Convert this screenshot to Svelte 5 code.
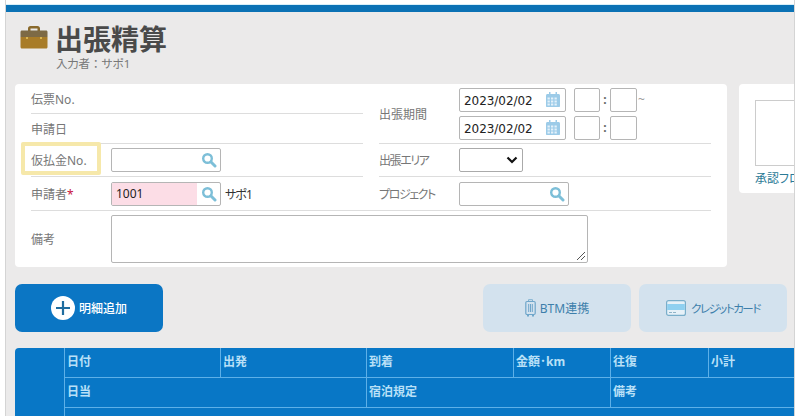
<script>
  const topLeft = [
    { label: "伝票No." },
    { label: "申請日" },
  ];
</script>

<div class="frame">
  <div class="topbar"></div>

  <header class="head">
    <svg class="bag" width="28" height="24" viewBox="0 0 28 24">
      <path d="M8 6V3.500C8 2 9 1 10.500 1h7C19 1 20 2 20 3.500V6h-2.500V3.500h-7V6z" fill="#8a6a2c" />
      <path d="M2 5.500h24c1 0 1.500.7 1.500 1.500v5H.5V7c0-.8.5-1.500 1.500-1.500z" fill="#7d6a45" />
      <path d="M.5 12h27v10c0 .8-.5 1.500-1.500 1.500H2C1 23.500.5 22.800.5 22z" fill="#a87c28" />
      <circle cx="7" cy="13" r="1" fill="#e8c860" />
      <circle cx="21" cy="13" r="1" fill="#e8c860" />
    </svg>
    <div>
      <h1>出張精算</h1>
      <p class="sub">入力者：サポ1</p>
    </div>
  </header>

  <div class="cards">
    <section class="card main">
      <div class="cols">
        <div class="col">
          {#each topLeft as row}
            <div class="row short"><span class="label">{row.label}</span></div>
          {/each}
          <div class="row tall">
            <span class="label hl">仮払金No.</span>
            <div class="field w110">
              <span class="val"></span>
              <svg class="loupe" width="16" height="16" viewBox="0 0 16 16"><circle cx="6.500" cy="6.500" r="4.300" fill="none" stroke="#7dbfd8" stroke-width="2.400" /><path d="M10 10l4 4" stroke="#7dbfd8" stroke-width="3" stroke-linecap="round" /></svg>
            </div>
          </div>
          <div class="row tall last">
            <span class="label">申請者<em>*</em></span>
            <div class="field w110">
              <span class="val pink">1001</span>
              <svg class="loupe" width="16" height="16" viewBox="0 0 16 16"><circle cx="6.500" cy="6.500" r="4.300" fill="none" stroke="#7dbfd8" stroke-width="2.400" /><path d="M10 10l4 4" stroke="#7dbfd8" stroke-width="3" stroke-linecap="round" /></svg>
            </div>
            <span class="name">サポ1</span>
          </div>
        </div>

        <div class="col">
          <div class="row period">
            <span class="label">出張期間</span>
            <div class="dates">
              {#each [0, 1] as i}
                <div class="dateline">
                  <div class="field w107">
                    <span class="val date">2023/02/02</span>
                    <svg class="cal" width="14" height="15" viewBox="0 0 14 15">
                      <path d="M0 3.500c0-.8.6-1.500 1.500-1.500h11c.9 0 1.500.7 1.500 1.500V14c0 .6-.4 1-1 1H1c-.6 0-1-.4-1-1z" fill="#9ccbe8" />
                      <path d="M3 0h1.500v3H3zM9.500 0H11v3H9.500z" fill="#9ccbe8" />
                      <path d="M1.500 5.500h2.300v2H1.500zM5 5.500h2.300v2H5zM8.500 5.500h2.300v2H8.500zM1.500 8.500h2.300v2H1.500zM5 8.500h2.300v2H5zM8.500 8.500h2.300v2H8.500zM1.500 11.500h2.300v2H1.500zM5 11.500h2.300v2H5zM8.500 11.500h2.300v2H8.500z" fill="#e4f1fa" />
                    </svg>
                  </div>
                  <span class="time first"></span>
                  <span class="colon">:</span>
                  <span class="time"></span>
                  {#if i === 0}<span class="tilde">~</span>{/if}
                </div>
              {/each}
            </div>
          </div>
          <div class="row tall">
            <span class="label kana">出張エリア</span>
            <div class="select">
              <svg width="12" height="8" viewBox="0 0 12 8"><path d="M1.500 1.500L6 6l4.500-4.500" fill="none" stroke="#111" stroke-width="2.200" /></svg>
            </div>
          </div>
          <div class="row tall last">
            <span class="label kana">プロジェクト</span>
            <div class="field w110">
              <span class="val"></span>
              <svg class="loupe" width="16" height="16" viewBox="0 0 16 16"><circle cx="6.500" cy="6.500" r="4.300" fill="none" stroke="#7dbfd8" stroke-width="2.400" /><path d="M10 10l4 4" stroke="#7dbfd8" stroke-width="3" stroke-linecap="round" /></svg>
            </div>
          </div>
        </div>
      </div>

      <div class="memo">
        <span class="label">備考</span>
        <div class="area">
          <svg class="grip" width="10" height="10" viewBox="0 0 10 10"><path d="M1 9l8-8M5 9l4-4" stroke="#555" stroke-width="1" /></svg>
        </div>
      </div>
    </section>

    <aside class="card flow">
      <div class="stamp"></div>
      <span class="flowlink">承認フロー</span>
    </aside>
  </div>

  <div class="actions">
    <button class="btn primary">
      <svg width="24" height="24" viewBox="0 0 24 24"><circle cx="12" cy="12" r="12" fill="#fff" /><path d="M12 5v14M5 12h14" stroke="#1f6d9f" stroke-width="2.200" /></svg>
      明細追加
    </button>
    <div class="spacer"></div>
    <button class="btn soft">
      <svg width="11" height="18" viewBox="0 0 11 18">
        <path d="M3.500 2.500V.7h4v1.800" fill="none" stroke="#7fb0d0" stroke-width="1" />
        <rect x=".8" y="2.500" width="9.400" height="13" rx="1.200" fill="none" stroke="#6fa6ca" stroke-width="1.200" />
        <path d="M3.700 5v8M5.500 5v8M7.300 5v8" stroke="#6fa6ca" stroke-width="1" />
        <path d="M2 16h2v1.500H2zM7 16h2v1.500H7z" fill="#6fa6ca" />
      </svg>
      BTM連携
    </button>
    <button class="btn soft card-btn">
      <svg width="20" height="16" viewBox="0 0 20 16">
        <rect x=".6" y=".6" width="18.800" height="14.800" rx="2" fill="#e6f1f8" stroke="#79aeca" stroke-width="1.200" />
        <rect x="1.200" y="4" width="17.600" height="6" fill="#8fd0f0" />
        <path d="M3 12.500h3M7 12.500h3" stroke="#8fb4c8" stroke-width="1" />
      </svg>
      クレジットカード
    </button>
  </div>

  <div class="table">
    <div class="c stub"></div>
    <div class="c">日付</div>
    <div class="c">出発</div>
    <div class="c">到着</div>
    <div class="c">金額･km</div>
    <div class="c">往復</div>
    <div class="c">小計</div>
    <div class="c s2">日当</div>
    <div class="c s2b">宿泊規定</div>
    <div class="c s2e">備考</div>
    <div class="c s6"></div>
  </div>
</div>

<style>
  :global(body) {
    margin: 0;
    background: #fff;
    overflow: hidden;
  }

  .frame {
    box-sizing: border-box;
    width: 790px;
    height: 416px;
    margin-left: 5px;
    padding-top: 4px;
    overflow: hidden;
    background: #ebeaea;
    background-clip: content-box;
    border-left: 1px solid #d4d4d4;
    border-right: 1px solid #d4d4d4;
    font-family: "Noto Sans", "Noto Sans CJK JP", sans-serif;
    font-feature-settings: "palt";
    font-size: 12px;
    color: #666;
  }

  .topbar {
    height: 8px;
    background: #0b72b5;
    border-top: 1px solid #d8f0fa;
    box-sizing: border-box;
  }

  .head {
    display: flex;
    gap: 7px;
    height: 72px;
    padding: 13px 0 0 14px;
    box-sizing: border-box;
  }

  h1 {
    margin: 0;
    font-size: 28px;
    line-height: 28px;
    font-weight: 700;
    color: #4a4a4a;
  }

  .sub {
    margin: 3px 0 0 1px;
    font-size: 11.500px;
    font-feature-settings: normal;
    letter-spacing: -0.2px;
    line-height: 16px;
    color: #777;
  }

  .cards {
    display: flex;
    gap: 12px;
    padding-left: 9px;
    align-items: flex-start;
  }

  .card {
    background: #fff;
    border-radius: 4px;
    box-sizing: border-box;
  }

  .main {
    width: 712px;
    height: 183px;
    padding: 0 16px;
    flex: none;
  }

  .cols {
    display: grid;
    grid-template-columns: 332px 332px;
    gap: 16px;
    border-bottom: 1px solid #ddd;
  }

  .row {
    display: flex;
    align-items: center;
    box-sizing: border-box;
    border-bottom: 1px solid #ddd;
  }

  .row.last {
    border-bottom: 0;
  }

  .short {
    height: 30px;
  }

  .tall {
    height: 33px;
  }

  .period {
    height: 60px;
  }

  .label {
    width: 80px;
    flex: none;
    color: #777;
  }

  .kana {
    letter-spacing: -1.400px;
  }

  .label em {
    color: #c8103c;
    font-style: normal;
  }

  .hl {
    position: relative;
  }

  .hl::before {
    content: "";
    position: absolute;
    left: -10px;
    top: -9px;
    width: 72px;
    height: 25px;
    border: 4px solid #f6e8aa;
    border-radius: 2px;
  }

  .field {
    display: flex;
    align-items: center;
    box-sizing: border-box;
    height: 24px;
    border: 1px solid #b5b5b5;
    border-radius: 2px;
    overflow: hidden;
    flex: none;
  }

  .w110 {
    width: 110px;
  }

  .w107 {
    width: 107px;
  }

  .val {
    flex: 1;
    height: 100%;
    padding-left: 4px;
    line-height: 22px;
    color: #222;
  }

  .pink {
    background: #fcdde6;
  }

  .date {
    font-family: "DejaVu Sans", sans-serif;
    font-size: 12px;
    line-height: 24px;
    letter-spacing: -0.05px;
  }

  .loupe {
    margin: 0 3px 0 4px;
  }

  .cal {
    margin: 0 5px 0 4px;
  }

  .name {
    margin-left: 4px;
    letter-spacing: -1px;
    color: #333;
  }

  .dates {
    display: flex;
    flex-direction: column;
    gap: 4px;
  }

  .dateline {
    display: flex;
    align-items: center;
  }

  .time {
    box-sizing: border-box;
    width: 27px;
    height: 24px;
    border: 1px solid #b5b5b5;
    border-radius: 2px;
  }

  .first {
    margin-left: 8px;
    width: 26px;
  }

  .colon {
    width: 10px;
    text-align: center;
    font-weight: 700;
    color: #666;
  }

  .tilde {
    margin-left: 1px;
    color: #999;
  }

  .select {
    box-sizing: border-box;
    width: 64px;
    height: 24px;
    display: flex;
    align-items: center;
    justify-content: flex-end;
    padding-right: 4px;
    border: 1px solid #aaa;
    border-radius: 2px;
  }

  .memo {
    display: flex;
    align-items: center;
    height: 56px;
    box-sizing: border-box;
  }

  .area {
    position: relative;
    box-sizing: border-box;
    width: 477px;
    height: 48px;
    border: 1px solid #b5b5b5;
    border-radius: 2px;
  }

  .grip {
    position: absolute;
    right: 1px;
    bottom: 1px;
  }

  .flow {
    width: 100px;
    height: 109px;
    padding: 16px 0 0 16px;
    flex: none;
  }

  .stamp {
    width: 80px;
    height: 66px;
    border: 1px solid #ccc;
    box-sizing: border-box;
  }

  .flowlink {
    display: block;
    margin-top: 3px;
    white-space: nowrap;
    color: #2b7a96;
  }

  .actions {
    display: flex;
    gap: 8px;
    padding: 17px 0 16px 9px;
  }

  .spacer {
    width: 304px;
  }

  .btn {
    display: flex;
    align-items: center;
    justify-content: center;
    gap: 4px;
    width: 148px;
    height: 48px;
    padding: 0;
    border: 0;
    border-radius: 7px;
    font-family: inherit;
    font-feature-settings: inherit;
    font-size: 12px;
  }

  .primary {
    background: #0b76c4;
    color: #fff;
    font-weight: 500;
  }

  .soft {
    background: #d3e2ee;
    color: #3d7fab;
  }

  .card-btn {
    gap: 5px;
    font-size: 11.500px;
    letter-spacing: -1.500px;
  }

  .table {
    display: grid;
    grid-template-columns: 49px 156px 146px 147px 97px 98px 86px;
    grid-template-rows: 30px 30px 30px;
    margin-left: 9px;
    background: #0877c6;
    border-radius: 4px 0 0 0;
    color: #b9e0f7;
    font-weight: 700;
    font-size: 12px;
  }

  .c {
    box-sizing: border-box;
    padding-left: 2px;
    line-height: 28px;
    border-left: 1px solid #5db0e8;
    border-bottom: 1px solid #5db0e8;
  }

  .stub {
    grid-row: 1 / span 3;
    border: 0;
  }

  .s2 {
    grid-column: 2 / span 2;
  }

  .s2b {
    grid-column: 4 / span 2;
  }

  .s2e {
    grid-column: 6 / span 2;
  }

  .s6 {
    grid-column: 2 / span 6;
  }
</style>
